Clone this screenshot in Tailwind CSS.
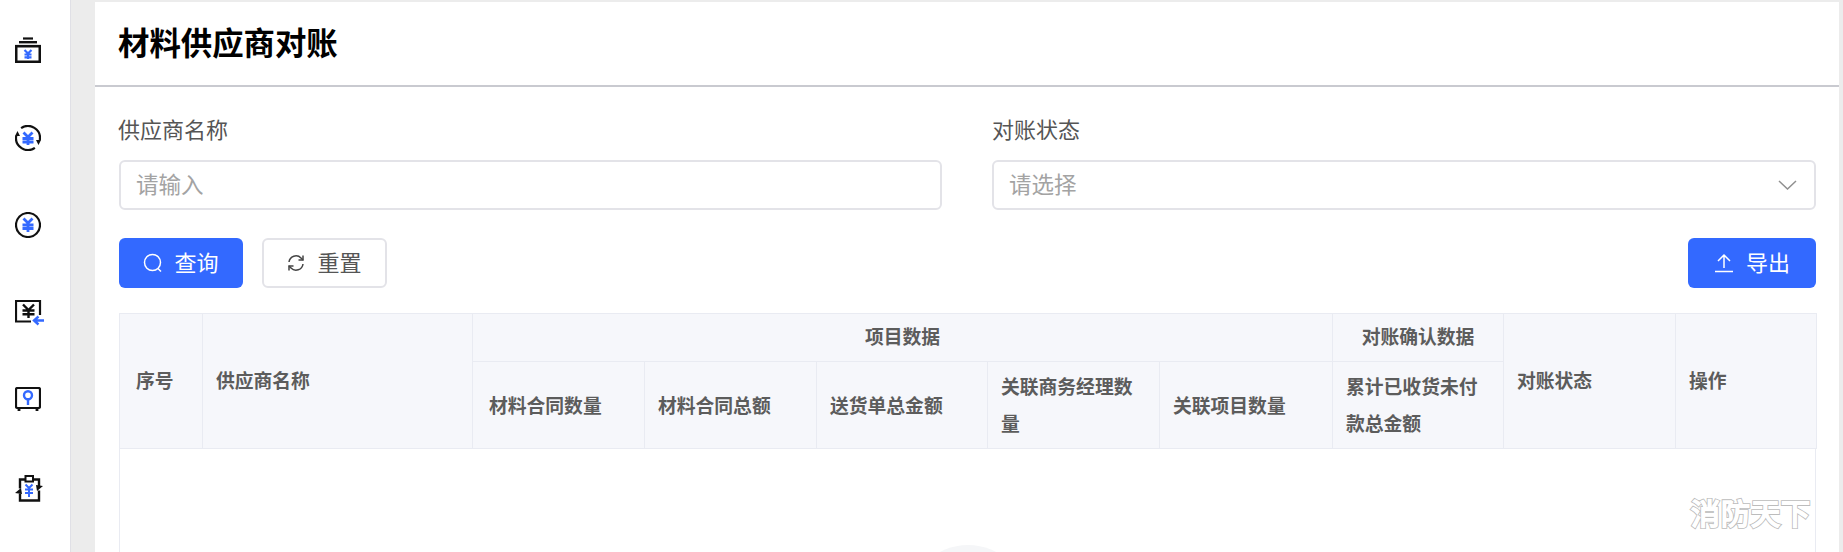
<!DOCTYPE html>
<html lang="zh">
<head>
<meta charset="utf-8">
<title>材料供应商对账</title>
<script src="https://cdn.jsdelivr.net/npm/@tailwindcss/browser@4"></script>
</head>
<body class="h-[552px] overflow-hidden bg-[#ececec] font-['Inter','Noto_Sans_CJK_SC',sans-serif]">
<div class="flex h-[552px]">
  <!-- side menu -->
  <aside class="flex w-[71px] shrink-0 flex-col gap-[61.500px] border-r border-[#e0e0e6] bg-white pl-[15px] pt-[37px]">
    <svg class="shrink-0" width="26" height="26" viewBox="0 0 26 26" fill="none">
      <path d="M8 1.500h10" stroke="#111" stroke-width="2.200"/><path d="M4 5.200h18" stroke="#111" stroke-width="2.400"/>
      <rect x="1.200" y="9.200" width="23.600" height="15.600" stroke="#111" stroke-width="2.600"/>
      <path d="M9.500 13l3.500 3.500 3.500-3.500M13 16.500V22M9.500 17.500h7M9.500 20.300h7" stroke="#3369ff" stroke-width="2.200"/>
    </svg>
    <svg class="shrink-0" width="26" height="26" viewBox="0 0 26 26" fill="none">
      <path d="M6.100 3.200A12 12 0 0 1 24.800 15M19.900 22.800A12 12 0 0 1 1.200 10.900" stroke="#111" stroke-width="2.200"/>
      <path d="M21 15h5l-2.500 5zM0 11h5L2.500 6z" fill="#111"/>
      <path d="M8.500 7.500l4.500 4.500 4.500-4.500M13 12v8M7.500 13.500h11M7.500 17h11" stroke="#3369ff" stroke-width="2.800"/>
    </svg>
    <svg class="shrink-0" width="26" height="26" viewBox="0 0 26 26" fill="none">
      <circle cx="13" cy="13" r="12" stroke="#111" stroke-width="2.200"/>
      <path d="M8.500 6.500l4.500 4.500 4.500-4.500M13 11v9M7.500 13h11M7.500 16.500h11" stroke="#3369ff" stroke-width="2.800"/>
    </svg>
    <svg class="shrink-0" width="29" height="26" viewBox="0 0 29 26" fill="none">
      <path d="M16 21.500H1V1h24v14" stroke="#111" stroke-width="2.200"/>
      <path d="M8 4.500l5.500 5.500 5.500-5.500M13.500 10v8M7.500 10.500h12M7.500 14.300h12" stroke="#111" stroke-width="2.400"/>
      <path d="M29 20.500H19M23.500 16.500l-4.500 4 4.500 4" stroke="#3369ff" stroke-width="2.400"/>
    </svg>
    <svg class="shrink-0" width="26" height="26" viewBox="0 0 26 26" fill="none">
      <rect x="1" y="1" width="24" height="20" rx="1.500" stroke="#111" stroke-width="2.200"/>
      <path d="M4 21v3M22 21v3" stroke="#111" stroke-width="2.800"/>
      <circle cx="13" cy="8.300" r="4" stroke="#3369ff" stroke-width="2.400"/>
      <path d="M13 12v6" stroke="#3369ff" stroke-width="2.400"/>
    </svg>
    <svg class="shrink-0" width="28" height="27" viewBox="0 0 28 27" fill="none">
      <rect x="10.500" y="1" width="7.500" height="5.500" stroke="#111" stroke-width="2"/>
      <path d="M10 4.500H5v9M18 4.500h6V11M5 18.500v7h19V15.500" stroke="#111" stroke-width="2.400"/>
      <path d="M0 18l6-5 1 6zM28 11l-6 5-1-6z" fill="#111"/>
      <path d="M10.500 9.500l3.500 3.500 3.500-3.500M14 13v9M10 14.500h8M10 18h8" stroke="#3369ff" stroke-width="2"/>
    </svg>
  </aside>

  <main class="ml-[24px] mt-[2px] flex w-[1744px] shrink-0 flex-col bg-white">
    <header class="flex h-[85px] shrink-0 items-center border-b-2 border-[#c9cad0] pl-[23px] pt-[2px]">
      <h1 class="text-[31.400px] font-bold leading-none text-black">材料供应商对账</h1>
    </header>

    <div class="pl-[24px] pr-[23px] pt-[28px]">
      <!-- filters -->
      <div class="grid grid-cols-[823px_824px] gap-x-[50px]">
        <div>
          <label class="-ml-[1px] block text-[22px] leading-[30px] text-[#555]">供应商名称</label>
          <div class="mt-[15px] flex h-[50px] items-center rounded-[6px] border-2 border-[#e3e3e8] pl-[15px] text-[22.500px] text-[#a3a3a3]">请输入</div>
        </div>
        <div>
          <label class="block text-[22px] leading-[30px] text-[#555]">对账状态</label>
          <div class="mt-[15px] flex h-[50px] items-center justify-between rounded-[6px] border-2 border-[#e3e3e8] pl-[15px] pr-[17px] text-[22.500px] text-[#a3a3a3]">
            请选择
            <svg width="19" height="10" viewBox="0 0 19 10" fill="none"><path d="M1 1l8.500 8 8.500-8" stroke="#909090" stroke-width="1.500"/></svg>
          </div>
        </div>
      </div>

      <!-- actions -->
      <div class="mt-[28px] flex items-center">
        <button class="flex h-[50px] w-[124px] items-center justify-center gap-[11px] rounded-[6px] bg-[#3369ff] text-[22px] text-white">
          <svg width="20" height="20" viewBox="0 0 20 20" fill="none"><circle cx="9.500" cy="9.500" r="8" stroke="#fff" stroke-width="1.500"/><path d="M15 15.500l3 3" stroke="#fff" stroke-width="1.500"/></svg>
          查询
        </button>
        <button class="ml-[19px] flex h-[50px] w-[125px] items-center justify-center gap-[12px] rounded-[6px] border-2 border-[#e3e3e8] bg-white text-[22px] text-[#555]">
          <svg width="18" height="18" viewBox="0 0 18 18" fill="none"><path d="M2 8a7 7 0 0 1 12-4l2 2M16 10a7 7 0 0 1-12 4l-2-2" stroke="#444" stroke-width="1.500"/><path d="M16 1.500V6h-4.500M2 16.500V12h4.500" stroke="#444" stroke-width="1.500"/></svg>
          重置
        </button>
        <button class="ml-auto flex h-[50px] w-[128px] items-center justify-center gap-[12px] rounded-[6px] bg-[#3369ff] text-[22px] text-white">
          <svg width="20" height="20" viewBox="0 0 20 20" fill="none"><path d="M1 18.500h18M10 15V2M4 8l6-6 6 6" stroke="#fff" stroke-width="1.500"/></svg>
          导出
        </button>
      </div>

      <!-- table -->
      <div class="mt-[25px]">
        <table class="w-[1697px] table-fixed border-collapse text-left text-[18.800px] font-bold text-[#5c5c5c]">
          <colgroup>
            <col class="w-[83px]"><col class="w-[270px]"><col class="w-[172px]"><col class="w-[172px]"><col class="w-[171px]"><col class="w-[172px]"><col class="w-[173px]"><col class="w-[171px]"><col class="w-[172px]"><col class="w-[141px]">
          </colgroup>
          <thead class="bg-[#f6f7fb]">
            <tr class="h-[48px]">
              <th rowspan="2" class="border border-[#e9ebf2] pl-[16px] pr-[13px] pt-[2px]">序号</th>
              <th rowspan="2" class="border border-[#e9ebf2] px-[13px] pt-[2px]">供应商名称</th>
              <th colspan="5" class="border border-[#e9ebf2] pt-[2px] text-center">项目数据</th>
              <th class="border border-[#e9ebf2] pt-[2px] text-center">对账确认数据</th>
              <th rowspan="2" class="border border-[#e9ebf2] px-[13px] pt-[2px]">对账状态</th>
              <th rowspan="2" class="border border-[#e9ebf2] px-[13px] pt-[2px]">操作</th>
            </tr>
            <tr class="h-[87px] leading-[37px]">
              <th class="border border-[#e9ebf2] pl-[16px] pr-[13px] pt-[2px]">材料合同数量</th>
              <th class="border border-[#e9ebf2] px-[13px] pt-[2px]">材料合同总额</th>
              <th class="border border-[#e9ebf2] px-[13px] pt-[2px]">送货单总金额</th>
              <th class="border border-[#e9ebf2] px-[13px] pt-[2px]">关联商务经理数量</th>
              <th class="border border-[#e9ebf2] px-[13px] pt-[2px]">关联项目数量</th>
              <th class="border border-[#e9ebf2] px-[13px] pt-[2px]">累计已收货未付款总金额</th>
            </tr>
          </thead>
        </table>
        <!-- empty state -->
        <div class="relative h-[120px] overflow-hidden border-l border-r border-[#e9ebf2]">
          <div class="absolute left-[788px] top-[96px] h-[120px] w-[120px] rounded-full bg-[#f5f6f8]"></div>
          <span class="absolute right-[4px] top-[51px] text-[29px] font-normal leading-none tracking-[1px] text-white [-webkit-text-stroke:3.500px_#bcbcbc]">消防天下</span>
          <span class="absolute right-[4px] top-[51px] text-[29px] font-normal leading-none tracking-[1px] text-white [-webkit-text-stroke:1.800px_#ffffff]">消防天下</span>
        </div>
      </div>
    </div>
  </main>
</div>
</body>
</html>
